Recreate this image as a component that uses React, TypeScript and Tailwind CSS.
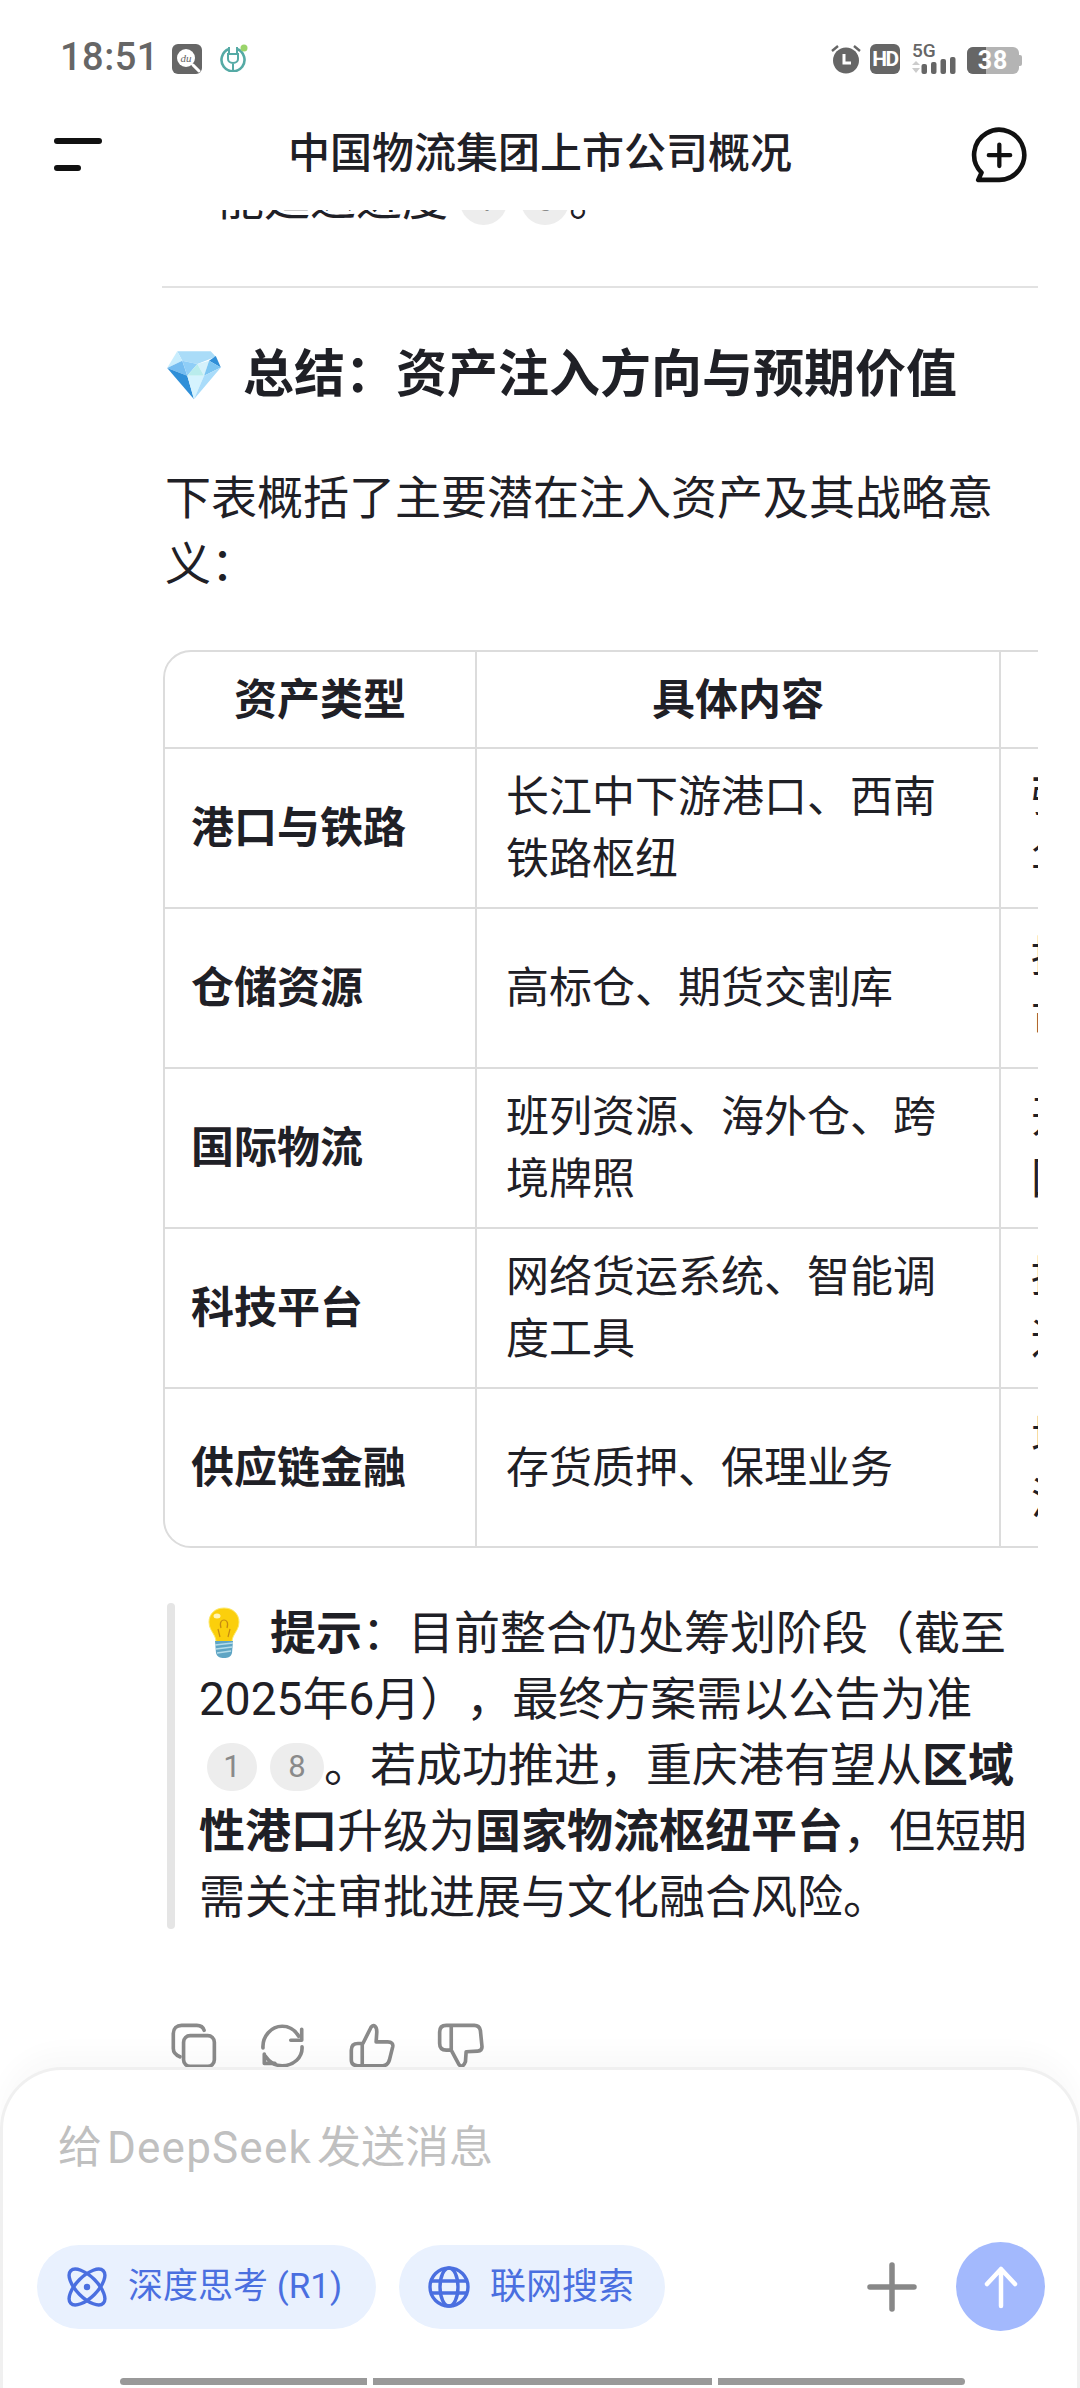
const FONT = "font-['Roboto','Noto_Sans_CJK_SC',sans-serif]";

const rows = [
  { type: "港口与铁路", detail: ["长江中下游港口、西南", "铁路枢纽"], value: ["强化多式联运", "华"] },
  { type: "仓储资源", detail: ["高标仓、期货交割库"], value: ["提升仓储能力", "市"] },
  { type: "国际物流", detail: ["班列资源、海外仓、跨", "境牌照"], value: ["开拓跨境业务", "国"] },
  { type: "科技平台", detail: ["网络货运系统、智能调", "度工具"], value: ["提升数字能力", "运"] },
  { type: "供应链金融", detail: ["存货质押、保理业务"], value: ["增加增值收入", "流"] },
];

function Cite({ n, className }: { n: string; className: string }) {
  return (
    <span
      className={`inline-flex h-[48px] items-center justify-center rounded-full bg-[#ededed] align-[4px] text-[31px] leading-none text-[#8a8a8a] ${className}`}
    >
      {n}
    </span>
  );
}

function Diamond() {
  return (
    <svg viewBox="50 55 170 155" className="h-[52px] w-[58px] shrink-0">
      <polygon points="85,62 185,62 200,78 145,100 100,90" fill="#aadcf8" />
      <polygon points="55,112 85,62 100,90" fill="#c8edfd" />
      <polygon points="55,112 100,90 115,135" fill="#74bcf0" />
      <polygon points="100,90 145,100 115,135" fill="#8fcef7" />
      <polygon points="145,100 180,90 165,135" fill="#d5f1fb" />
      <polygon points="115,135 145,100 165,135" fill="#b9ecec" />
      <polygon points="180,90 200,76 215,110" fill="#2f8fd8" />
      <polygon points="180,90 215,110 165,135" fill="#7cc5f2" />
      <polygon points="55,112 115,135 135,205" fill="#2f8fd8" />
      <polygon points="115,135 165,135 135,205" fill="#d5f3fe" />
      <polygon points="165,135 215,110 135,205" fill="#a9dcfa" />
    </svg>
  );
}

function Bulb() {
  return (
    <svg viewBox="0 0 34 52" className="ml-[8px] mr-[29px] inline-block h-[52px] w-[34px] align-[-10px]">
      <path d="M17 1C8 1 2 7 2 15c0 6 3 9 5 13 1 2 2 4 2 7h16c0-3 1-5 2-7 2-4 5-7 5-13 0-8-6-14-15-14z" fill="#fbcf0c" stroke="#fde96b" strokeWidth="1" />
      <ellipse cx="10" cy="9" rx="3.5" ry="2.5" fill="#fff5b8" />
      <path d="M13 30l-2-8M21 30l2-8M14 21c-2-6 1-8 3-8s5 2 3 8" fill="none" stroke="#c58a12" strokeWidth="1.2" />
      <path d="M8 34h18l-1 12c-1 4-4 5-8 5s-7-1-8-5z" fill="#5fa5c4" />
      <path d="M8 38l18-2M9 42l16-2M10 46l14-2" stroke="#b5dcea" strokeWidth="1.4" />
    </svg>
  );
}

function StatusBar() {
  return (
    <div className="flex h-[110px] shrink-0 items-start pl-[60px] pr-[58px] pt-[35px]">
      <span className="text-[38px] font-medium leading-[44px] tracking-[0.5px] text-[#666]">18:51</span>
      <svg viewBox="0 0 30 30" className="ml-[13px] mt-[9px] h-[30px] w-[30px]">
        <rect width="30" height="30" rx="6" fill="#666" />
        <circle cx="14" cy="14" r="9" fill="#fff" />
        <path d="M21 21l6 6" stroke="#fff" strokeWidth="3" strokeLinecap="round" />
        <text x="14" y="17.5" textAnchor="middle" fontSize="11" fontStyle="italic" fontFamily="Liberation Serif" fill="#666">du</text>
      </svg>
      <svg viewBox="0 0 28 28" className="ml-[18px] mt-[9px] h-[28px] w-[28px]">
        <path d="M9 5a11.5 11.5 0 1 0 8 0" fill="none" stroke="#55aaa5" strokeWidth="2.6" />
        <path d="M9 3v7M17 3v7M8 10h10v5c0 2-2 4-5 4s-5-2-5-4zM13 19v8" fill="none" stroke="#55aaa5" strokeWidth="2" />
        <circle cx="24" cy="4" r="3.5" fill="#9ad46a" />
      </svg>
      <div className="ml-auto mt-[9px] flex items-start">
        <svg viewBox="0 0 30 30" className="h-[30px] w-[30px]">
          <circle cx="15" cy="16.5" r="13" fill="#666" />
          <path d="M1 7l6-5M29 7l-6-5" stroke="#666" strokeWidth="2.4" />
          <path d="M13 10v9h7" fill="none" stroke="#fff" strokeWidth="3" />
        </svg>
        <div className="ml-[9px] flex h-[30px] w-[30px] items-center justify-center rounded-[6px] bg-[#666] text-[21px] font-bold leading-none tracking-[-1.5px] text-white">
          HD
        </div>
        <div className="relative ml-[12px] h-[30px] w-[44px]">
          <span className="absolute left-0 top-[-2px] text-[19px] font-medium leading-[18px] text-[#666]">5G</span>
          <svg viewBox="0 0 44 30" className="absolute inset-0 h-[30px] w-[44px]">
            <path d="M0 21l4-4 4 4zM0 24l4 5 4-5z" fill="#ccc" />
            <rect x="9.5" y="20" width="5.5" height="10" rx="2" fill="#666" />
            <rect x="19" y="18" width="5.5" height="12" rx="2" fill="#666" />
            <rect x="28.5" y="15" width="5.5" height="15" rx="2" fill="#666" />
            <rect x="38" y="13" width="5.5" height="17" rx="2" fill="#666" />
          </svg>
        </div>
        <div className="ml-[11px] mt-[3px] flex items-center">
          <div className="relative flex h-[27px] w-[52px] items-center justify-center overflow-hidden rounded-[6px] bg-[#b4b4b4] text-[25px] font-bold leading-none tracking-[1px] text-white">
            <span className="absolute inset-y-0 left-0 w-[19px] bg-[#666]" />
            <span className="relative">38</span>
          </div>
          <span className="h-[11px] w-[3px] rounded-r-[2px] bg-[#b4b4b4]" />
        </div>
      </div>
    </div>
  );
}

function Header() {
  return (
    <div className="relative flex h-[100px] shrink-0 items-center justify-center bg-white">
      <div className="absolute left-[54px] top-[28px] flex flex-col items-start gap-[21px]">
        <span className="h-[6px] w-[48px] rounded-full bg-[#111]" />
        <span className="h-[6px] w-[27px] rounded-full bg-[#111]" />
      </div>
      <span className="mt-[-12px] text-[42px] font-medium leading-[56px] text-[#1f2026]">中国物流集团上市公司概况</span>
      <svg viewBox="510 315 182 175" className="absolute left-[969px] top-[16px] h-[58px] w-[60px]">
        <path d="M602 478A76 76 0 1 0 548 456L538 478Z" fill="none" stroke="#111" strokeWidth="14" strokeLinejoin="round" />
        <path d="M570 403h65M602 371v65" stroke="#111" strokeWidth="13" strokeLinecap="round" />
      </svg>
    </div>
  );
}

function ActionIcons() {
  return (
    <div className="mt-[92px] flex pl-[8px]">
      <svg viewBox="60 90 145 145" className="h-[48px] w-[48px]" fill="none" stroke="#8a8a8a" strokeWidth="11" strokeLinecap="round" strokeLinejoin="round">
        <rect x="101" y="131" width="93" height="93" rx="20" />
        <path d="M163 115c-3-10-10-15-22-15H95c-15 0-25 10-25 25v45c0 12 8 20 20 25" />
      </svg>
      <svg viewBox="330 90 145 145" className="ml-[41px] h-[48px] w-[48px]" fill="none" stroke="#8a8a8a" strokeWidth="11" strokeLinecap="round" strokeLinejoin="round">
        <path d="M342 168c-2-35 25-65 58-65 22 0 38 10 50 30" />
        <path d="M459 112v33h-33" />
        <path d="M460 165c2 32-25 57-60 57-22 0-38-10-50-28" />
        <path d="M346 187v28h32" />
      </svg>
      <svg viewBox="595 90 145 145" className="ml-[41px] h-[48px] w-[48px]" fill="none" stroke="#8a8a8a" strokeWidth="11" strokeLinecap="round" strokeLinejoin="round">
        <path d="M640 155l25-50c8-8 17-3 17 15l-2 30h35c12 0 17 6 15 15l-10 40c-4 12-10 17-20 17h-75c-14 0-20-7-20-17v-30c0-14 6-20 20-20zM638 155v67" />
      </svg>
      <svg viewBox="862 90 145 145" className="ml-[41px] h-[48px] w-[48px]" fill="none" stroke="#8a8a8a" strokeWidth="11" strokeLinecap="round" strokeLinejoin="round">
        <path d="M905 100h70c11 0 16 6 18 15l5 50c0 9-5 13-13 13l-35 2-2 30c-6 16-14 16-20 8l-23-43h-15c-14 0-20-7-20-20v-35c0-13 6-20 20-20zM905 100v75" />
      </svg>
    </div>
  );
}

function AssetTable() {
  return (
    <div className="mt-[53px] ml-px overflow-hidden">
      <table className="w-[1200px] table-fixed border-separate border-spacing-0 rounded-[28px] border-2 border-[#dcdcdc] text-[43px] leading-[62px]">
        <thead>
          <tr className="h-[97px] font-bold">
            <th className="w-[312px] border-b-2 border-r-2 border-[#dcdcdc] font-bold">资产类型</th>
            <th className="w-[524px] border-b-2 border-r-2 border-[#dcdcdc] font-bold">具体内容</th>
            <th className="border-b-2 border-[#dcdcdc] font-bold">战略意义</th>
          </tr>
        </thead>
        <tbody>
          {rows.map((row, i) => {
            const last = i === rows.length - 1;
            const line = last ? "" : "border-b-2";
            return (
              <tr key={row.type} className={last ? "h-[157px]" : "h-[160px]"}>
                <td className={`border-r-2 border-[#dcdcdc] pl-[26px] font-bold ${line}`}>{row.type}</td>
                <td className={`border-r-2 border-[#dcdcdc] pl-[29px] ${line}`}>
                  {row.detail.map((t) => (
                    <div key={t}>{t}</div>
                  ))}
                </td>
                <td className={`border-[#dcdcdc] pl-[30px] ${line}`}>
                  {row.value.map((t) => (
                    <div key={t}>{t}</div>
                  ))}
                </td>
              </tr>
            );
          })}
        </tbody>
      </table>
    </div>
  );
}

function InputPanel() {
  return (
    <div className="relative z-10 flex h-[321px] shrink-0 flex-col rounded-t-[62px] border-x-[3px] border-t-[3px] border-[#f0f0f0] bg-white shadow-[0_-16px_24px_rgba(0,0,0,0.025)]">
      <div className="mt-[50px] pl-[55px] text-[44px] leading-[56px] text-[#c0c0c0]">
        给<span className="mx-[5px] tracking-[1.2px]">DeepSeek</span>发送消息
      </div>
      <div className="mt-[66px] flex items-center pl-[34px] pr-[32px]">
        <div className="flex h-[84px] w-[339px] items-center rounded-full bg-[#e9f1fe] pl-[30px] text-[35px] leading-none text-[#4a6fe0]">
          <svg viewBox="0 0 40 40" className="h-[40px] w-[40px]" fill="none" stroke="#4a6fe0" strokeWidth="3.4">
            <ellipse cx="20" cy="20" rx="10.5" ry="23" transform="rotate(-45 20 20)" />
            <ellipse cx="20" cy="20" rx="10.5" ry="23" transform="rotate(45 20 20)" />
            <circle cx="20" cy="20" r="3.2" fill="#4a6fe0" stroke="none" />
          </svg>
          <span className="ml-[21px]">深度思考 (R1)</span>
        </div>
        <div className="ml-[23px] flex h-[84px] w-[266px] items-center rounded-full bg-[#e9f1fe] pl-[29px] text-[36px] leading-none text-[#4a6fe0]">
          <svg viewBox="0 0 42 42" className="h-[42px] w-[42px]" fill="none" stroke="#4a6fe0" strokeWidth="3.4">
            <circle cx="21" cy="21" r="19" />
            <ellipse cx="21" cy="21" rx="9" ry="19" />
            <path d="M3 15h36M3 27h36" />
          </svg>
          <span className="ml-[20px]">联网搜索</span>
        </div>
        <svg viewBox="0 0 50 50" className="ml-auto h-[50px] w-[50px]" stroke="#888" strokeWidth="5.5" strokeLinecap="round">
          <path d="M3 25h44M25 3v44" />
        </svg>
        <div className="ml-[39px] flex h-[89px] w-[89px] items-center justify-center rounded-full bg-[#a3b9fd]">
          <svg viewBox="0 0 44 44" className="h-[44px] w-[44px]" fill="none" stroke="#fff" strokeWidth="4.5" strokeLinecap="round" strokeLinejoin="round">
            <path d="M22 41V4M8 19L22 4l14 15" />
          </svg>
        </div>
      </div>
      <div className="mt-auto mb-[3px] flex justify-center gap-[6px] pl-[5px]">
        <span className="h-[7px] w-[247px] rounded-l-full bg-[#999]" />
        <span className="h-[7px] w-[339px] bg-[#999]" />
        <span className="h-[7px] w-[247px] rounded-r-full bg-[#999]" />
      </div>
    </div>
  );
}

export default function App() {
  return (
    <div className={`flex h-[2388px] w-[1080px] flex-col overflow-hidden bg-white text-[#1f2026] [text-spacing-trim:space-all] ${FONT}`}>
      <StatusBar />
      <Header />
      <div className="min-h-0 flex-1 overflow-hidden pl-[162px] pr-[42px]">
        <div className="mt-[-44px] pl-[56px] text-[46px] leading-[66px]">
          能延迟进度
          <Cite n="4" className="ml-[12px] w-[47px]" />
          <Cite n="6" className="ml-[14px] w-[48px]" />。
        </div>
        <div className="mt-[54px] h-[2px] bg-[#e2e2e2]" />
        <div className="mt-[52px] flex h-[70px] items-center pl-[3px] text-[51px] font-bold leading-[70px]">
          <Diamond />
          <span className="ml-[20px]">总结：资产注入方向与预期价值</span>
        </div>
        <p className="mt-[55px] pl-[3px] text-[46px] leading-[66px]">下表概括了主要潜在注入资产及其战略意义：</p>
        <AssetTable />
        <blockquote className="relative mt-[52px] ml-[5px] pl-[32px] text-[46px] leading-[66px]">
          <span className="absolute bottom-[1px] left-0 top-[3px] w-[8px] rounded-[4px] bg-[#e5e5e5]" />
          <Bulb />
          <b>提示</b>：目前整合仍处筹划阶段（截至2025年6月），最终方案需以公告为准
          <span className="whitespace-nowrap">
            <Cite n="1" className="ml-[8px] w-[50px]" />
            <Cite n="8" className="ml-[13px] w-[54px]" />。
          </span>
          若成功推进，重庆港有望从<b>区域性港口</b>升级为<b>国家物流枢纽平台</b>，但短期需关注审批进展与文化融合风险。
        </blockquote>
        <ActionIcons />
      </div>
      <InputPanel />
    </div>
  );
}
